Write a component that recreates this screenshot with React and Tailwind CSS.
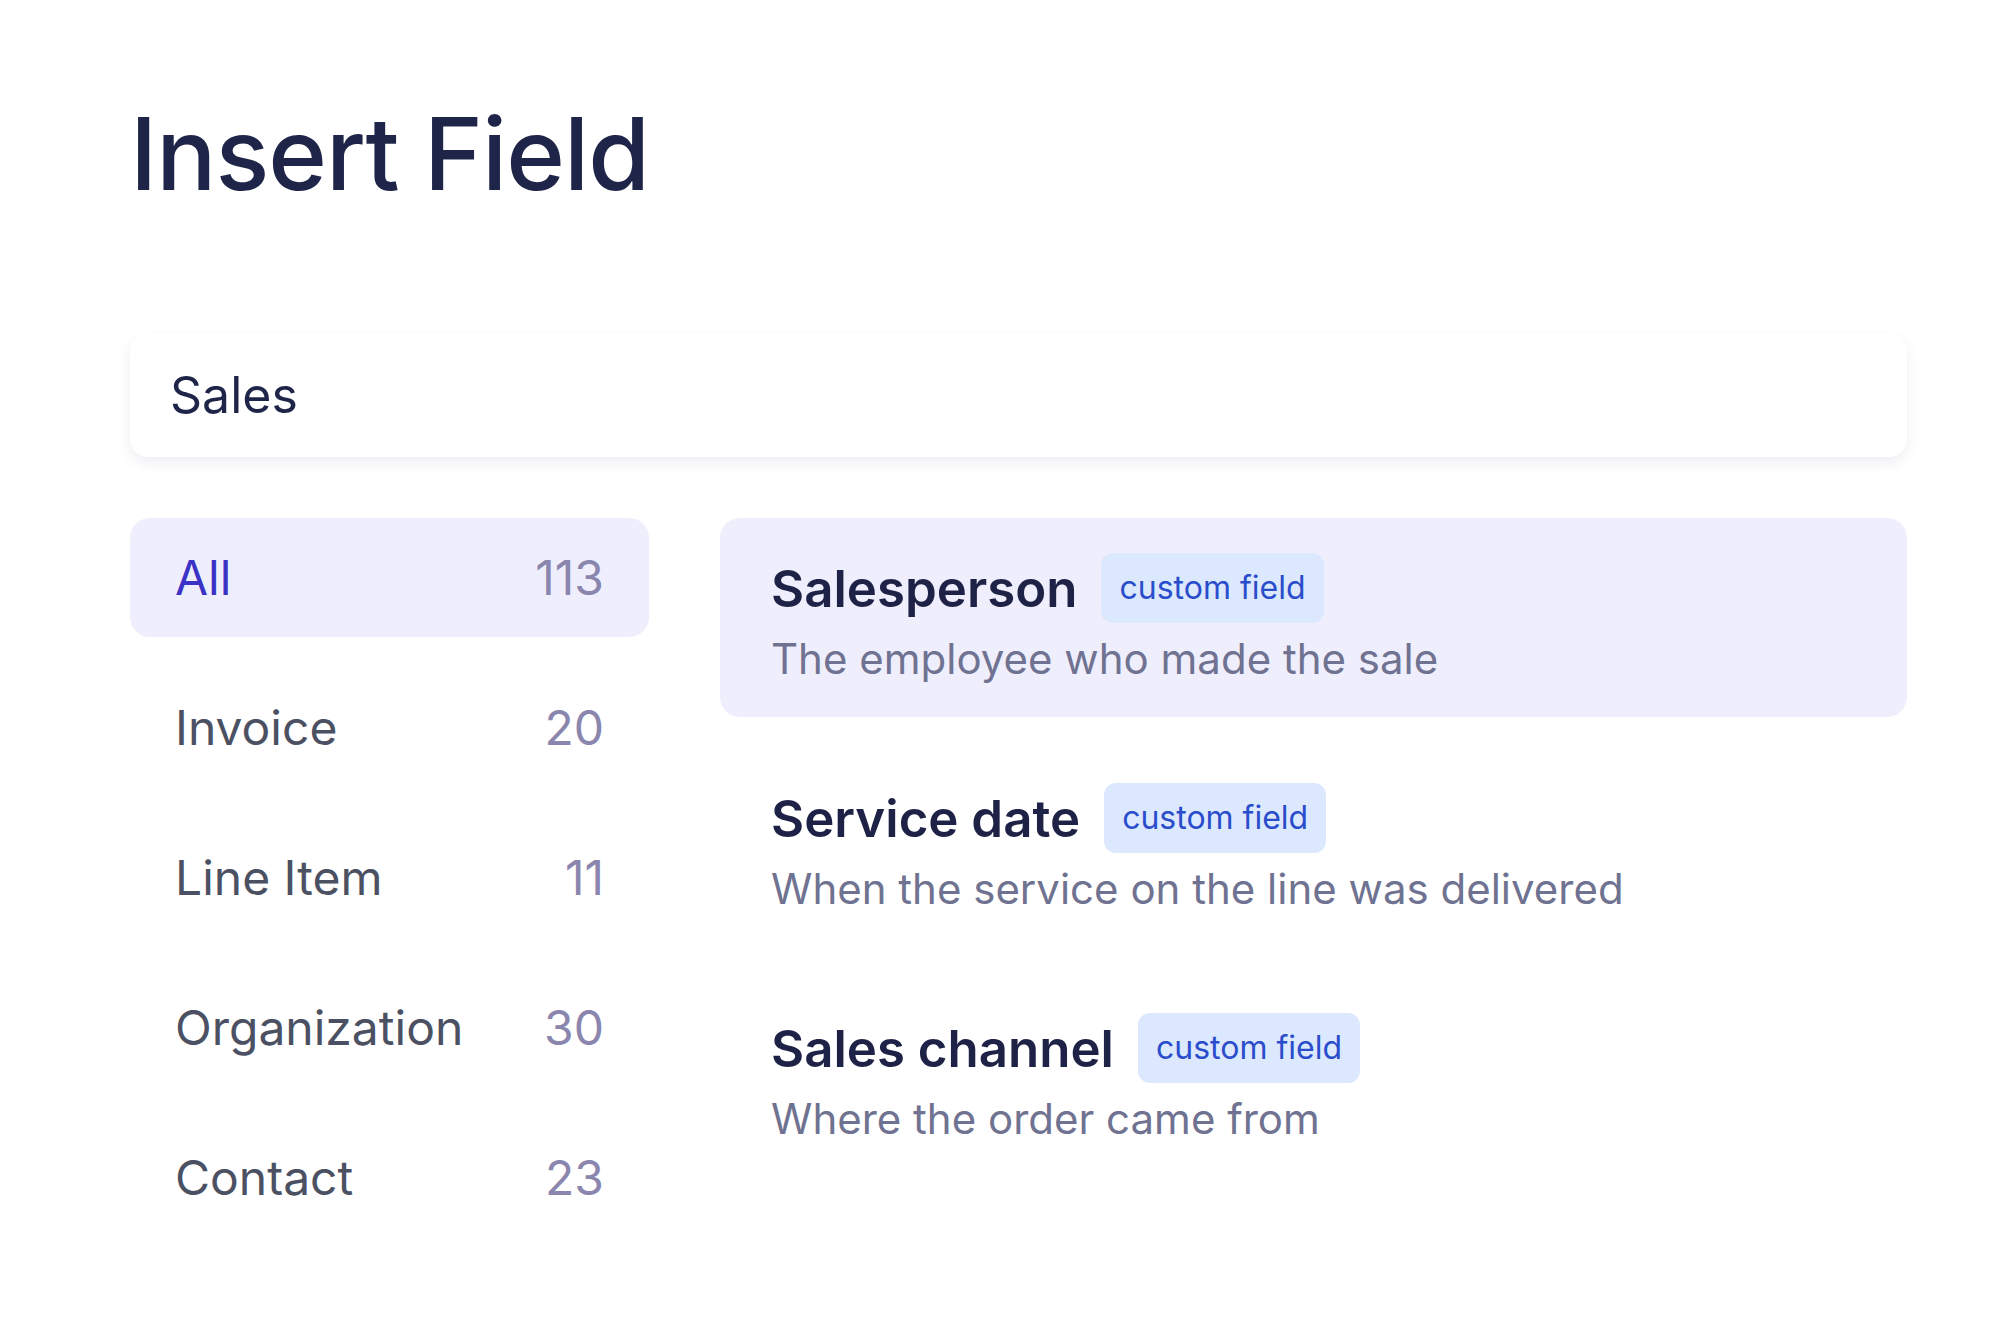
const categories = [
  { name: "All", count: 113, active: true },
  { name: "Invoice", count: 20 },
  { name: "Line Item", count: 11 },
  { name: "Organization", count: 30 },
  { name: "Contact", count: 23 },
];

const fields = [
  {
    title: "Salesperson",
    description: "The employee who made the sale",
    active: true,
  },
  {
    title: "Service date",
    description: "When the service on the line was delivered",
  },
  {
    title: "Sales channel",
    description: "Where the order came from",
  },
];

function CategoryRow({ name, count, active }) {
  return (
    <div
      className={
        "flex h-[119px] items-center justify-between rounded-[20px] px-[45px] text-[48px] " +
        (active ? "bg-[#efeefd]" : "")
      }
    >
      <span className={active ? "text-[#3a33c6]" : "text-[#4b5162]"}>
        {name}
      </span>
      <span className="text-[#8a86ae]">{count}</span>
    </div>
  );
}

function FieldCard({ title, description, active }) {
  return (
    <div
      className={
        "h-[199px] rounded-[20px] pl-[51px] pt-[35px] " +
        (active ? "bg-[#efeefd]" : "")
      }
    >
      <div className="flex h-[70px] items-center gap-[24px]">
        <span className="text-[51px] font-semibold leading-none text-[#1e2246]">
          {title}
        </span>
        <span className="flex h-[70px] items-center rounded-[12px] bg-[#dce8fd] px-[18px] text-[32px] text-[#2a4dcc]">
          custom field
        </span>
      </div>
      <p className="mt-[6px] text-[42px] leading-[60px] text-[#6f7391]">
        {description}
      </p>
    </div>
  );
}

export default function App() {
  return (
    <div className="min-h-screen bg-white px-[130px] pt-[94px] font-['Inter',sans-serif] antialiased">
      <h1 className="text-[100px] leading-[120px] font-medium tracking-[-0.01em] text-[#1f2548]">
        Insert Field
      </h1>

      <div className="mt-[119px] flex h-[124px] w-[1777px] items-center rounded-[18px] bg-white px-[40px] text-[50px] text-[#1f2548] shadow-[0_6px_14px_rgba(30,34,80,0.07)]">
        Sales
      </div>

      <div className="mt-[61px] flex w-[1777px] gap-[71px]">
        <div className="flex w-[519px] flex-col gap-[31px]">
          {categories.map((c) => (
            <CategoryRow key={c.name} {...c} />
          ))}
        </div>

        <div className="flex flex-1 flex-col gap-[31px]">
          {fields.map((f) => (
            <FieldCard key={f.title} {...f} />
          ))}
        </div>
      </div>
    </div>
  );
}
